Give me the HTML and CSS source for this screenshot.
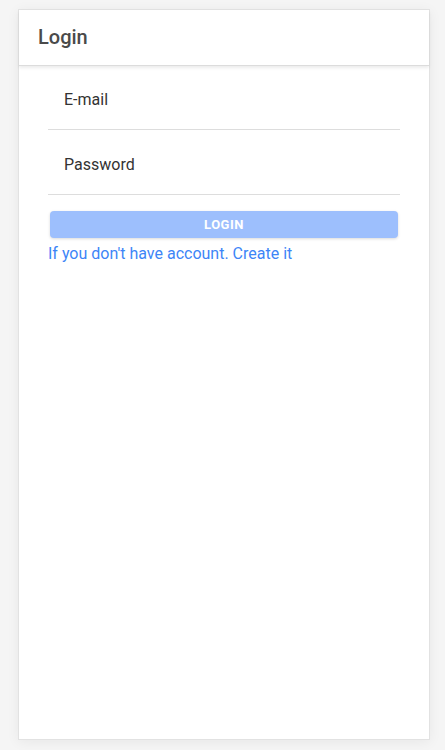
FILE: index.html
```html
<!DOCTYPE html>
<html>
<head>
<meta charset="utf-8">
<link rel="stylesheet" href="styles.css">
</head>
<body>
<div class="card">
  <div class="header">Login</div>
  <div class="content">
    <div class="field field-first"><span class="label">E-mail</span></div>
    <div class="field"><span class="label">Password</span></div>
    <button class="btn">LOGIN</button>
    <a class="link">If you don't have account. Create it</a>
  </div>
</div>
</body>
</html>
```
FILE: styles.css
```css
html, body {
  margin: 0;
  padding: 0;
  background: #f5f5f5;
  font-family: Roboto, "Liberation Sans", sans-serif;
}
body {
  padding: 9px 16px 10px 18px;
}
.card {
  box-sizing: border-box;
  width: 412px;
  height: 731px;
  background: #fff;
  border: 1px solid #e2e2e2;
  box-shadow: 0 2px 12px rgba(0,0,0,0.06);
  display: flex;
  flex-direction: column;
}
.header {
  height: 56px;
  box-sizing: border-box;
  padding: 15px 0 0 19px;
  font-size: 20px;
  font-weight: 500;
  color: #4a4a4a;
  line-height: 24px;
  border-bottom: 1px solid #dcdcdc;
  box-shadow: 0 2px 3px rgba(0,0,0,0.08);
  position: relative;
  z-index: 1;
}
.content {
  padding: 0 29px;
  display: flex;
  flex-direction: column;
}
.field {
  height: 65px;
  box-sizing: border-box;
  border-bottom: 1px solid #dddddd;
  display: flex;
  align-items: center;
  padding-left: 16px;
  padding-top: 4px;
}
.field-first {
  height: 64px;
  padding-top: 3px;
}
.label {
  font-size: 16px;
  color: #333;
}
.btn {
  margin: 16px 2px 0 2px;
  height: 27px;
  border: none;
  border-radius: 4px;
  background: #9dbffd;
  color: #fff;
  font-family: Roboto, "Liberation Sans", sans-serif;
  font-weight: 700;
  font-size: 13px;
  letter-spacing: 0.5px;
  box-shadow: 0 1px 3px rgba(0,0,0,0.15);
  padding: 0;
}
.link {
  margin-top: 5px;
  font-size: 16px;
  line-height: 22px;
  color: #3d85f7;
}
```
